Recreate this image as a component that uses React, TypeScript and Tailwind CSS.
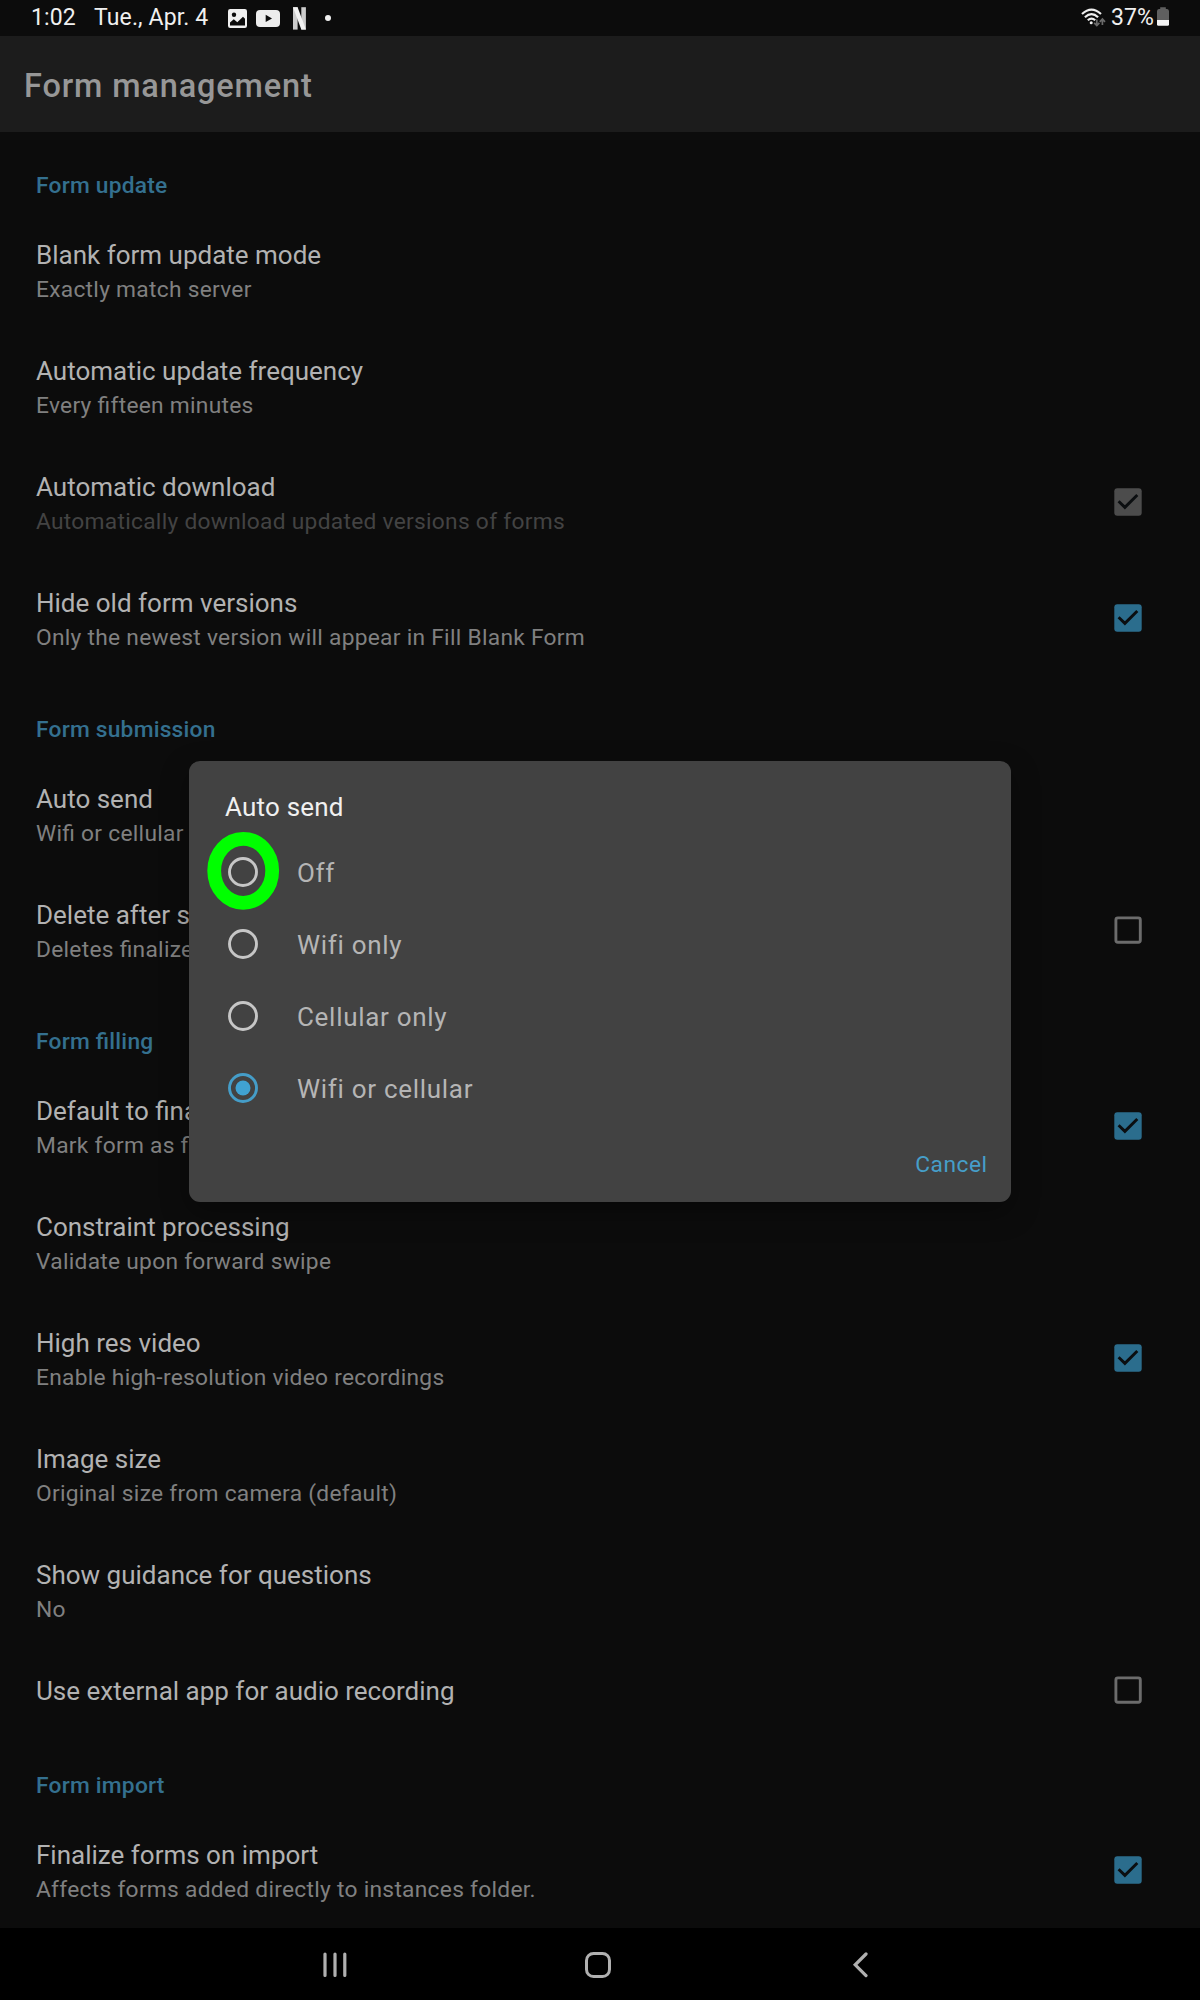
import React from "react";

type BoxState = "on" | "off" | "disabled";

function Checkbox({ state }: { state: BoxState }) {
  if (state === "off") {
    return (
      <svg className="size-7 shrink-0" viewBox="0 0 28 28" fill="none">
        <rect x="1.9" y="1.9" width="24.4" height="24.4" rx="2" stroke="#6c6c6c" strokeWidth="2.9" />
      </svg>
    );
  }
  return (
    <svg className="size-7 shrink-0" viewBox="0 0 28 28" fill="none">
      <rect x="0.3" y="0.3" width="27.4" height="27.4" rx="3" fill={state === "on" ? "#2b6d8d" : "#4c4c4c"} />
      <path d="M4.6 13.2 L10.9 19.4 L23.3 7" stroke="#0b0e10" strokeWidth="2.9" />
    </svg>
  );
}

function Category({ children }: { children: React.ReactNode }) {
  return (
    <h2 className="h-20 shrink-0 px-9 pt-[41px] text-[22.75px] leading-[26px] font-medium tracking-[0.22px] text-[#34708f] [font-feature-settings:'liga']">
      {children}
    </h2>
  );
}

function Row({ title, sub, box }: { title: string; sub?: string; box?: BoxState }) {
  return (
    <div
      className={
        "flex shrink-0 items-center justify-between pr-[58px] pl-9 whitespace-nowrap " + (sub ? "h-[116px]" : "h-[84px]")
      }
    >
      <div className={sub ? "pt-[3px]" : "pt-0.5"}>
        <p className="text-[26px] leading-[30px] tracking-normal text-[#b2b2b2]">{title}</p>
        {sub && (
          <p
            className={
              "mt-[7px] text-[22.75px] leading-[26px] tracking-[0.28px] [font-feature-settings:'liga'] " +
              (box === "disabled" ? "text-[#434343]" : "text-[#808080]")
            }
          >
            {sub}
          </p>
        )}
      </div>
      {box && <Checkbox state={box} />}
    </div>
  );
}

function StatusBar() {
  return (
    <div className="flex h-9 shrink-0 items-center justify-between pr-[31px] pl-[31px] text-[23px] leading-[26px] tracking-[0.13px] text-[#f0f0f0]">
      <div className="flex h-9 items-center">
        <span className="w-[63px]">1:02</span>
        <span className="w-[134px] whitespace-nowrap">Tue., Apr. 4</span>
        <svg className="h-9 w-[19px]" viewBox="0 0 19 36">
          <rect y="9" width="19" height="19" rx="2.2" fill="#f0f0f0" />
          <circle cx="6" cy="14.7" r="2.2" fill="#0c0c0c" />
          <path d="M2 25.5 V22.5 L5.8 19.3 L9.3 22.2 L15 16.8 L17 18.8 V25.5 Z" fill="#0c0c0c" />
        </svg>
        <svg className="ml-[9px] h-9 w-6" viewBox="0 0 24 36">
          <rect y="10" width="24" height="17" rx="4" fill="#ededed" />
          <path d="M9.7 14.8 L16 18.4 L9.7 22 Z" fill="#0c0c0c" />
        </svg>
        <svg className="ml-[13px] h-9 w-[13px]" viewBox="0 0 13 36">
          <rect y="7.2" width="4.6" height="22.4" fill="#cccccc" />
          <rect x="8.3" y="7.2" width="4.6" height="22.4" fill="#cccccc" />
          <path d="M0 7.2 H4.6 L12.9 29.6 H8.3 Z" fill="#f2f2f2" />
        </svg>
        <svg className="ml-[19px] h-9 w-[6px]" viewBox="0 0 6 36">
          <circle cx="3" cy="18" r="3" fill="#f0f0f0" />
        </svg>
      </div>
      <div className="flex h-9 items-center">
        <svg className="h-9 w-[25px]" viewBox="0 0 25 36" fill="none">
          <g stroke="#eeeeee" strokeWidth="2.2">
            <path d="M1 14 Q10.5 5.2 20 14" />
            <path d="M3.9 17.2 Q10.5 11 17.1 17.2" />
            <path d="M6.8 20.3 Q10.5 16.8 14.2 20.3" />
          </g>
          <circle cx="10.2" cy="22.7" r="1.5" fill="#eeeeee" />
          <g stroke="#6a6a6a" strokeWidth="1.7">
            <path d="M15.8 19.5 V25.6 M13.2 22.8 L15.8 25.6 L18.4 22.8" />
            <path d="M21.4 25 V19.2 M18.8 21.8 L21.4 19 L24 21.8" />
          </g>
        </svg>
        <span className="ml-[5px] w-[46px]">37%</span>
        <svg className="h-9 w-3" viewBox="0 0 12 36">
          <path d="M3.2 7.3 H8.8 V9 H10.2 Q12 9.4 12 11.2 V20 H0 V11.2 Q0 9.4 1.8 9 H3.2 Z" fill="#5f5f5f" />
          <path d="M0 20 H12 V24.4 Q12 25.8 10.6 25.8 H1.4 Q0 25.8 0 24.4 Z" fill="#f4f4f4" />
        </svg>
      </div>
    </div>
  );
}

function Option({ label, selected, marked }: { label: string; selected?: boolean; marked?: boolean }) {
  return (
    <div className="relative flex h-[72px] items-center pl-[39px]">
      <svg className="size-[30px]" viewBox="0 0 30 30" fill="none">
        <circle cx="15" cy="15" r="13.5" stroke={selected ? "#459dc8" : "#c6c6c6"} strokeWidth="2.9" />
        {selected && <circle cx="15" cy="15" r="7.5" fill="#40a2d2" />}
      </svg>
      <span className="ml-[39px] pt-px text-[26px] leading-[30px] tracking-[0.7px] text-[#b5b5b5]">{label}</span>
      {marked && (
        <svg className="absolute -top-[5px] left-[17px] h-20 w-[74px]" viewBox="0 0 74 80" fill="none">
          <ellipse cx="37.2" cy="39.8" rx="29" ry="32" stroke="#00ff00" strokeWidth="13.8" />
        </svg>
      )}
    </div>
  );
}

function AutoSendDialog() {
  return (
    <div className="absolute top-[761px] left-[189px] flex h-[441px] w-[822px] flex-col rounded-[11px] bg-[#424242] shadow-[0_10px_28px_rgba(0,0,0,0.35)]">
      <h3 className="h-[75px] pt-[31px] pl-9 text-[26px] leading-[30px] tracking-[0.2px] text-[#f0f0f0]">Auto send</h3>
      <Option label="Off" marked />
      <Option label="Wifi only" />
      <Option label="Cellular only" />
      <Option label="Wifi or cellular" selected />
      <div className="flex justify-end pt-7 pr-[23.5px] text-[22.75px] leading-[26px] tracking-[0.5px] text-[#469ec9]">
        Cancel
      </div>
    </div>
  );
}

function NavBar() {
  return (
    <div className="flex h-[72px] shrink-0 items-center bg-black pt-0.5 pl-[323px]">
      <svg className="h-[26px] w-6" viewBox="0 0 24 26" stroke="#b0b0b0" strokeWidth="3.2" strokeLinecap="round">
        <path d="M2 2.1 V23.4 M12 2.1 V23.4 M21.8 2.1 V23.4" />
      </svg>
      <svg className="ml-[238px] h-[26px] w-[26px]" viewBox="0 0 26 26" fill="none">
        <rect x="1.5" y="1.5" width="23" height="23" rx="7" stroke="#b0b0b0" strokeWidth="3" />
      </svg>
      <svg className="ml-[241px] h-[26px] w-4" viewBox="0 0 16 26" fill="none">
        <path d="M14 2 L3.2 12.8 L14 23.6" stroke="#b0b0b0" strokeWidth="3.2" strokeLinecap="round" />
      </svg>
    </div>
  );
}

export default function App() {
  return (
    <div className="relative flex h-[2000px] w-[1200px] flex-col overflow-hidden bg-[#0c0c0c] font-[Roboto,sans-serif]">
      <StatusBar />
      <header className="flex h-24 shrink-0 items-center bg-[#1c1c1c] pt-1 pl-6">
        <h1 className="text-[32.5px] leading-[38px] font-medium tracking-[0.86px] text-[#979797]">Form management</h1>
      </header>
      <main className="flex flex-1 flex-col">
        <Category>Form update</Category>
        <Row title="Blank form update mode" sub="Exactly match server" />
        <Row title="Automatic update frequency" sub="Every fifteen minutes" />
        <Row title="Automatic download" sub="Automatically download updated versions of forms" box="disabled" />
        <Row title="Hide old form versions" sub="Only the newest version will appear in Fill Blank Form" box="on" />
        <Category>Form submission</Category>
        <Row title="Auto send" sub="Wifi or cellular" />
        <Row title="Delete after send" sub="Deletes finalized" box="off" />
        <Category>Form filling</Category>
        <Row title="Default to finalized" sub="Mark form as finalized" box="on" />
        <Row title="Constraint processing" sub="Validate upon forward swipe" />
        <Row title="High res video" sub="Enable high-resolution video recordings" box="on" />
        <Row title="Image size" sub="Original size from camera (default)" />
        <Row title="Show guidance for questions" sub="No" />
        <Row title="Use external app for audio recording" box="off" />
        <Category>Form import</Category>
        <Row title="Finalize forms on import" sub="Affects forms added directly to instances folder." box="on" />
      </main>
      <NavBar />
      <AutoSendDialog />
    </div>
  );
}
